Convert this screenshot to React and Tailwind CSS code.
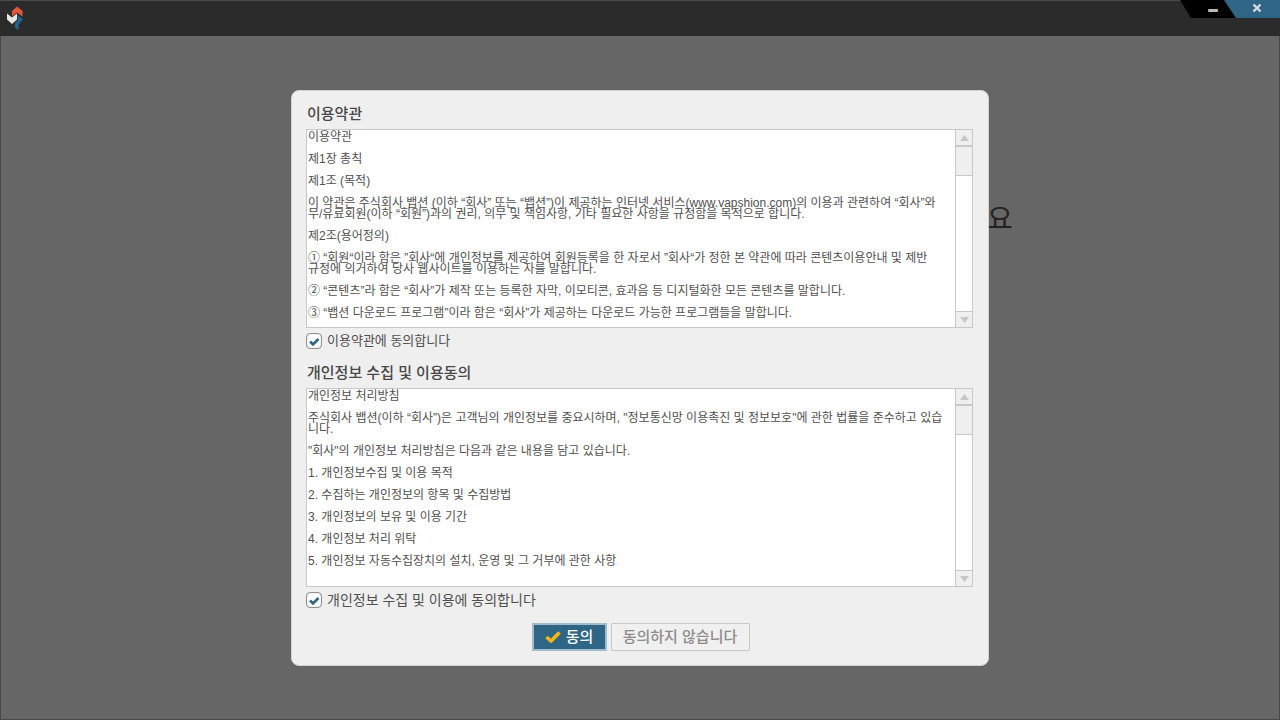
import { useState } from "react";

const termsText = [
  ["이용약관"],
  ["제1장 총칙"],
  ["제1조 (목적)"],
  [
    "이 약관은 주식회사 뱁션 (이하 “회사” 또는 “뱁션”)이 제공하는 인터넷 서비스(www.vapshion.com)의 이용과 관련하여 “회사”와",
    "무/유료회원(이하 “회원”)과의 권리, 의무 및 책임사항, 기타 필요한 사항을 규정함을 목적으로 합니다."
  ],
  ["제2조(용어정의)"],
  [
    "① “회원“이라 함은 ”회사“에 개인정보를 제공하여 회원등록을 한 자로서 ”회사“가 정한 본 약관에 따라 콘텐츠이용안내 및 제반",
    "규정에 의거하여 당사 웹사이트를 이용하는 자를 말합니다."
  ],
  ["② “콘텐츠”라 함은 “회사”가 제작 또는 등록한 자막, 이모티콘, 효과음 등 디지털화한 모든 콘텐츠를 말합니다."],
  ["③ “뱁션 다운로드 프로그램”이라 함은 “회사”가 제공하는 다운로드 가능한 프로그램들을 말합니다."]
];

const privacyText = [
  ["개인정보 처리방침"],
  [
    "주식회사 뱁션(이하 “회사”)은 고객님의 개인정보를 중요시하며, \"정보통신망 이용촉진 및 정보보호\"에 관한 법률을 준수하고 있습",
    "니다."
  ],
  ["\"회사\"의 개인정보 처리방침은 다음과 같은 내용을 담고 있습니다."],
  ["1. 개인정보수집 및 이용 목적"],
  ["2. 수집하는 개인정보의 항목 및 수집방법"],
  ["3. 개인정보의 보유 및 이용 기간"],
  ["4. 개인정보 처리 위탁"],
  ["5. 개인정보 자동수집장치의 설치, 운영 및 그 거부에 관한 사항"]
];

function Logo() {
  return (
    <svg className="w-6 h-8" viewBox="0 0 24 32" aria-hidden="true">
      <path d="M17 5.500l5.500 4.500v5.500L17 11.500l-5 4V10z" fill="#e2573c" />
      <path d="M17.500 14l5.500 4.500-4.500 5v5.500L15 26.500V22l3-3z" fill="#1f6791" />
      <path d="M7 12.500l5 4 5-4v6l-5 4.500-5-4.500z" fill="#e9e7df" />
    </svg>
  );
}

function ScrollBar() {
  return (
    <div className="w-[17px] shrink-0 flex flex-col border-l border-[#c8c8c8] bg-white">
      <button type="button" aria-label="위로" className="h-[15px] flex items-center justify-center bg-[#efefef]">
        <svg className="w-[9px] h-[6px]" viewBox="0 0 9 6">
          <path d="M4.500 0L9 6H0z" fill="#c6c6c6" />
        </svg>
      </button>
      <div className="h-[31px] bg-[#efefef] border-t-2 border-b border-[#c8c8c8]"></div>
      <div className="flex-1"></div>
      <button type="button" aria-label="아래로" className="h-4 flex items-center justify-center bg-[#efefef] border-t border-[#c8c8c8]">
        <svg className="w-[9px] h-[6px]" viewBox="0 0 9 6">
          <path d="M0 0h9L4.500 6z" fill="#c6c6c6" />
        </svg>
      </button>
    </div>
  );
}

function TermsBox({ label, paragraphs }) {
  return (
    <div className="h-[199px] flex bg-white border border-[#c8c8c8]">
      <div
        role="region"
        aria-label={label}
        tabIndex={0}
        className="flex-1 min-w-0 overflow-hidden pl-px pt-[2px] flex flex-col gap-[11px] text-xs leading-[11px] text-[#505050] whitespace-nowrap"
      >
        {paragraphs.map((lines, index) => (
          <p key={index}>
            {lines.map((line) => (
              <span key={line} className="block">{line}</span>
            ))}
          </p>
        ))}
      </div>
      <ScrollBar />
    </div>
  );
}

function AgreeCheck({ id, label, size, checked, onChange }) {
  return (
    <div className="mt-[5px] h-4 flex items-center gap-[5px]">
      <span className="grid">
        <input
          id={id}
          type="checkbox"
          checked={checked}
          onChange={(e) => onChange(e.target.checked)}
          className="peer col-start-1 row-start-1 appearance-none w-4 h-4 rounded border border-[#8f8f8f] bg-white shadow-[inset_0_0_1px_#999]"
        />
        <svg
          className="col-start-1 row-start-1 w-4 h-4 pointer-events-none invisible peer-checked:visible"
          viewBox="0 0 16 16"
        >
          <path d="M4 8.500l3 3 5.500-5.500" fill="none" stroke="#2f6685" strokeWidth="2.600" />
        </svg>
      </span>
      <label htmlFor={id} className={`${size} leading-4 text-[#505050]`}>{label}</label>
    </div>
  );
}

export default function App() {
  const [terms, setTerms] = useState(true);
  const [privacy, setPrivacy] = useState(true);

  return (
    <div className="min-h-screen flex flex-col bg-[#666666] font-['Liberation_Sans','Noto_Sans_CJK_KR',sans-serif]">
      {/* Title bar */}
      <header className="h-9 flex items-start justify-between bg-[#2b2b2b] border-t border-[#4a4a4a]">
        <Logo />
        <div className="flex -mt-px">
          <button
            type="button"
            aria-label="최소화"
            className="w-14 h-[18px] bg-black flex items-center justify-center pl-[10px] pt-[3px] [clip-path:polygon(0_0,100%_0,100%_100%,11px_100%)]"
          >
            <span className="w-[10px] h-[3px] rounded-[1px] bg-[#b9b9b9]"></span>
          </button>
          <button
            type="button"
            aria-label="닫기"
            className="w-14 h-[18px] -ml-3 bg-[#2f6685] flex items-center justify-center pl-[10px] pb-[2px] [clip-path:polygon(0_0,100%_0,100%_100%,12px_100%)]"
          >
            <svg className="w-[10px] h-[10px]" viewBox="0 0 10 10">
              <path d="M1.500 1.500l7 7M8.500 1.500l-7 7" stroke="#cfdde6" strokeWidth="2.400" />
            </svg>
          </button>
        </div>
      </header>

      <main className="relative flex-1 flex items-center justify-center pt-px border-x border-b border-[#4a4848]">
        <p className="absolute left-1/2 top-[164px] ml-[347px] text-[28px] leading-10 text-[#222222]">요</p>

        {/* Agreement dialog */}
        <section
          role="dialog"
          aria-label="이용약관"
          className="relative w-full max-w-[698px] rounded-lg bg-[#efefef] border border-[#d2d2d2] pl-[14px] pr-[15px] pt-[11px] pb-[14px]"
        >
          <h2 className="mb-[3px] pl-px text-[15px] leading-6 font-medium text-[#484848]">이용약관</h2>
          <TermsBox label="이용약관 내용" paragraphs={termsText} />
          <AgreeCheck id="terms" label="이용약관에 동의합니다" size="text-[13px]" checked={terms} onChange={setTerms} />

          <h2 className="mt-3 mb-[3px] pl-px text-[15px] leading-6 font-medium text-[#484848]">개인정보 수집 및 이용동의</h2>
          <TermsBox label="개인정보 수집 및 이용동의 내용" paragraphs={privacyText} />
          <AgreeCheck id="privacy" label="개인정보 수집 및 이용에 동의합니다" size="text-[14px]" checked={privacy} onChange={setPrivacy} />

          <div className="mt-[15px] pl-[2px] flex justify-center gap-1 text-[15px] font-medium">
            <button
              type="button"
              className="w-[75px] h-7 flex items-center justify-center gap-[5px] pt-px bg-[#2f6685] border-2 border-[#a3bccb] text-white"
            >
              <svg className="w-4 h-3 -mt-px" viewBox="0 0 16 12">
                <path d="M1.500 6l4.500 4L14.500 1.500" fill="none" stroke="#fdb515" strokeWidth="3.600" />
              </svg>
              동의
            </button>
            <button
              type="button"
              className="w-[139px] h-7 pt-px bg-[#f0f0f0] border border-[#c8c8c8] rounded-[1px] text-[#8c8c8c]"
            >
              동의하지 않습니다
            </button>
          </div>
        </section>
      </main>
    </div>
  );
}
